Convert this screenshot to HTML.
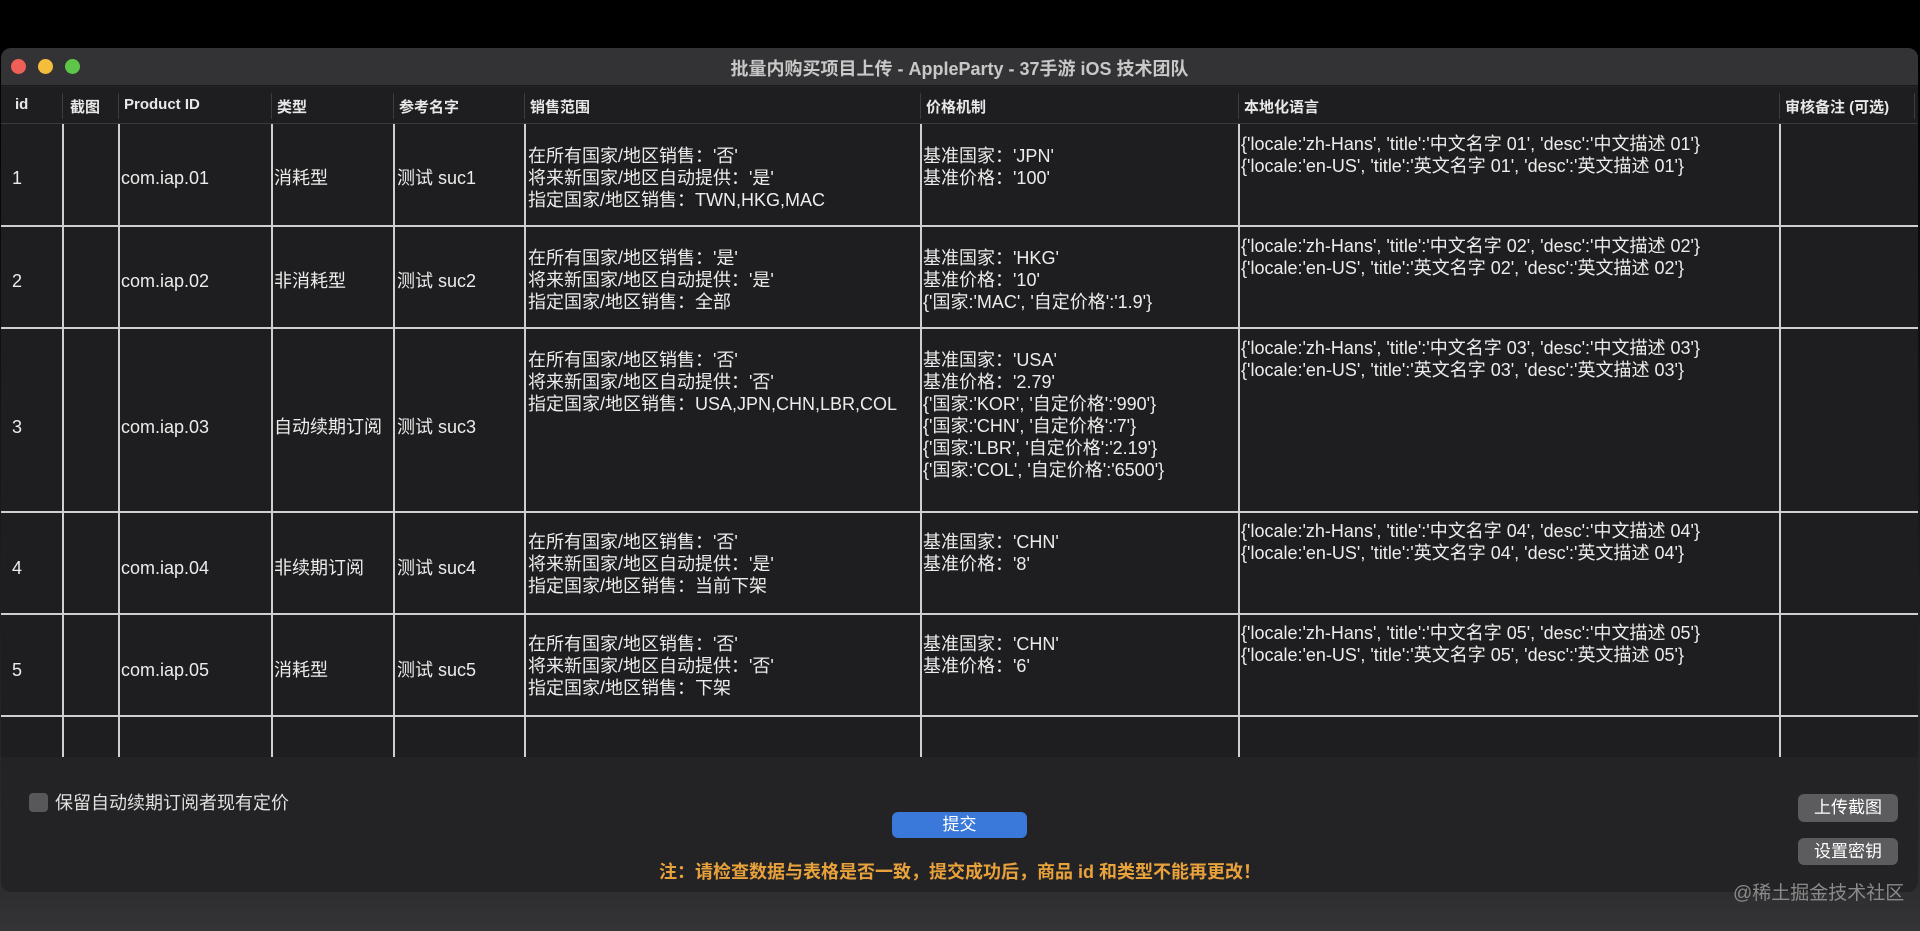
<!DOCTYPE html>
<html><head><meta charset="utf-8"><style>
*{margin:0;padding:0;box-sizing:border-box}
html,body{width:1920px;height:931px;overflow:hidden}
body{background:linear-gradient(#000 0,#000 48px,#2e2e30 892px,#343436 931px);font-family:"Liberation Sans","Noto Sans CJK SC",sans-serif;color:#e6e6e6;position:relative}
.win{position:absolute;left:1px;top:48px;width:1917px;height:844px;border-radius:10px;background:#232325;overflow:hidden}
.title{position:absolute;left:0;top:0;width:100%;height:38px;background:#333335;border-bottom:1px solid #1a1a1a}
.title .t{position:absolute;left:0;width:100%;top:7px;text-align:center;font-size:18px;font-weight:bold;color:#c8c8c8}
.dot{position:absolute;top:11px;width:15px;height:15px;border-radius:50%}
.tbl{position:absolute;left:0;top:39px;width:100%;height:670px;background:#1e1e20}
.hd{position:absolute;top:0;height:37px;width:100%;border-bottom:1px solid #3a3a3a}
.h{position:absolute;top:9px;font-size:15px;font-weight:bold;color:#e8e8e8}
.hs{position:absolute;top:6px;height:26px;width:1px;background:#3c3c3c}
.v{position:absolute;top:37px;bottom:0;width:2px;background:#cfcfcf}
.hr{position:absolute;left:0;width:100%;height:2px;background:#cfcfcf}
.c{position:absolute;font-size:18px;line-height:22px;white-space:nowrap;color:#ececec}
.cb{position:absolute;left:29px;top:793px;width:19px;height:19px;border-radius:4px;background:#58585a}
.btn{position:absolute;color:#fff;font-size:17px;text-align:center;border-radius:6px}
</style></head><body>
<div class="win">
 <div class="title">
  <div class="dot" style="left:10px;background:#ed5f57"></div>
  <div class="dot" style="left:37px;background:#f4bd3b"></div>
  <div class="dot" style="left:64px;background:#5ec548"></div>
  <div class="t">批量内购买项目上传 - AppleParty - 37手游 iOS 技术团队</div>
 </div>
 <div class="tbl">
  <div class="hd">
   <div class="h" style="left:14px">id</div>
   <div class="hs" style="left:61px"></div><div class="h" style="left:69px">截图</div>
   <div class="hs" style="left:117px"></div><div class="h" style="left:123px">Product ID</div>
   <div class="hs" style="left:270px"></div><div class="h" style="left:276px">类型</div>
   <div class="hs" style="left:392px"></div><div class="h" style="left:398px">参考名字</div>
   <div class="hs" style="left:523px"></div><div class="h" style="left:529px">销售范围</div>
   <div class="hs" style="left:919px"></div><div class="h" style="left:925px">价格机制</div>
   <div class="hs" style="left:1237px"></div><div class="h" style="left:1243px">本地化语言</div>
   <div class="hs" style="left:1778px"></div><div class="h" style="left:1784px">审核备注 (可选)</div>
   <div class="hs" style="left:1913px"></div>
  </div>
  <div class="v" style="left:61px"></div><div class="v" style="left:117px"></div><div class="v" style="left:270px"></div><div class="v" style="left:392px"></div><div class="v" style="left:523px"></div><div class="v" style="left:919px"></div><div class="v" style="left:1237px"></div><div class="v" style="left:1778px"></div>
  <div class="hr" style="top:138px"></div><div class="hr" style="top:240px"></div><div class="hr" style="top:424px"></div><div class="hr" style="top:526px"></div><div class="hr" style="top:628px"></div>
 </div>
</div>
<div id="cells">
<div class="c" style="left:12px;top:167px">1</div>
<div class="c" style="left:121px;top:167px">com.iap.01</div>
<div class="c" style="left:274px;top:167px">消耗型</div>
<div class="c" style="left:397px;top:167px">测试 suc1</div>
<div class="c" style="left:528px;top:145px">在所有国家/地区销售：'否'<br>将来新国家/地区自动提供：'是'<br>指定国家/地区销售：TWN,HKG,MAC</div>
<div class="c" style="left:923px;top:145px">基准国家：'JPN'<br>基准价格：'100'</div>
<div class="c" style="left:1241px;top:133px">{'locale:'zh-Hans', 'title':'中文名字 01', 'desc':'中文描述 01'}<br>{'locale:'en-US', 'title':'英文名字 01', 'desc':'英文描述 01'}</div>

<div class="c" style="left:12px;top:270px">2</div>
<div class="c" style="left:121px;top:270px">com.iap.02</div>
<div class="c" style="left:274px;top:270px">非消耗型</div>
<div class="c" style="left:397px;top:270px">测试 suc2</div>
<div class="c" style="left:528px;top:247px">在所有国家/地区销售：'是'<br>将来新国家/地区自动提供：'是'<br>指定国家/地区销售：全部</div>
<div class="c" style="left:923px;top:247px">基准国家：'HKG'<br>基准价格：'10'<br>{'国家:'MAC', '自定价格':'1.9'}</div>
<div class="c" style="left:1241px;top:235px">{'locale:'zh-Hans', 'title':'中文名字 02', 'desc':'中文描述 02'}<br>{'locale:'en-US', 'title':'英文名字 02', 'desc':'英文描述 02'}</div>

<div class="c" style="left:12px;top:416px">3</div>
<div class="c" style="left:121px;top:416px">com.iap.03</div>
<div class="c" style="left:274px;top:416px">自动续期订阅</div>
<div class="c" style="left:397px;top:416px">测试 suc3</div>
<div class="c" style="left:528px;top:349px">在所有国家/地区销售：'否'<br>将来新国家/地区自动提供：'否'<br>指定国家/地区销售：USA,JPN,CHN,LBR,COL</div>
<div class="c" style="left:923px;top:349px">基准国家：'USA'<br>基准价格：'2.79'<br>{'国家:'KOR', '自定价格':'990'}<br>{'国家:'CHN', '自定价格':'7'}<br>{'国家:'LBR', '自定价格':'2.19'}<br>{'国家:'COL', '自定价格':'6500'}</div>
<div class="c" style="left:1241px;top:337px">{'locale:'zh-Hans', 'title':'中文名字 03', 'desc':'中文描述 03'}<br>{'locale:'en-US', 'title':'英文名字 03', 'desc':'英文描述 03'}</div>

<div class="c" style="left:12px;top:557px">4</div>
<div class="c" style="left:121px;top:557px">com.iap.04</div>
<div class="c" style="left:274px;top:557px">非续期订阅</div>
<div class="c" style="left:397px;top:557px">测试 suc4</div>
<div class="c" style="left:528px;top:531px">在所有国家/地区销售：'否'<br>将来新国家/地区自动提供：'是'<br>指定国家/地区销售：当前下架</div>
<div class="c" style="left:923px;top:531px">基准国家：'CHN'<br>基准价格：'8'</div>
<div class="c" style="left:1241px;top:520px">{'locale:'zh-Hans', 'title':'中文名字 04', 'desc':'中文描述 04'}<br>{'locale:'en-US', 'title':'英文名字 04', 'desc':'英文描述 04'}</div>

<div class="c" style="left:12px;top:659px">5</div>
<div class="c" style="left:121px;top:659px">com.iap.05</div>
<div class="c" style="left:274px;top:659px">消耗型</div>
<div class="c" style="left:397px;top:659px">测试 suc5</div>
<div class="c" style="left:528px;top:633px">在所有国家/地区销售：'否'<br>将来新国家/地区自动提供：'否'<br>指定国家/地区销售：下架</div>
<div class="c" style="left:923px;top:633px">基准国家：'CHN'<br>基准价格：'6'</div>
<div class="c" style="left:1241px;top:622px">{'locale:'zh-Hans', 'title':'中文名字 05', 'desc':'中文描述 05'}<br>{'locale:'en-US', 'title':'英文名字 05', 'desc':'英文描述 05'}</div>
</div>
<div class="cb"></div>
<div class="c" style="left:55px;top:792px;color:#e0e0e0">保留自动续期订阅者现有定价</div>
<div class="btn" style="left:892px;top:812px;width:135px;height:26px;line-height:26px;background:#3a78d9">提交</div>
<div class="c" style="left:0;width:1920px;text-align:center;top:861px;color:#e9a23b;font-weight:bold">注：请检查数据与表格是否一致，提交成功后，商品 id 和类型不能再更改！</div>
<div class="btn" style="left:1798px;top:794px;width:100px;height:28px;line-height:28px;background:#5c5c5e">上传截图</div>
<div class="btn" style="left:1798px;top:838px;width:100px;height:27px;line-height:27px;background:#5c5c5e">设置密钥</div>
<div class="c" style="left:1733px;top:883px;font-size:19px;color:#8a8a8a">@稀土掘金技术社区</div>
</body></html>
